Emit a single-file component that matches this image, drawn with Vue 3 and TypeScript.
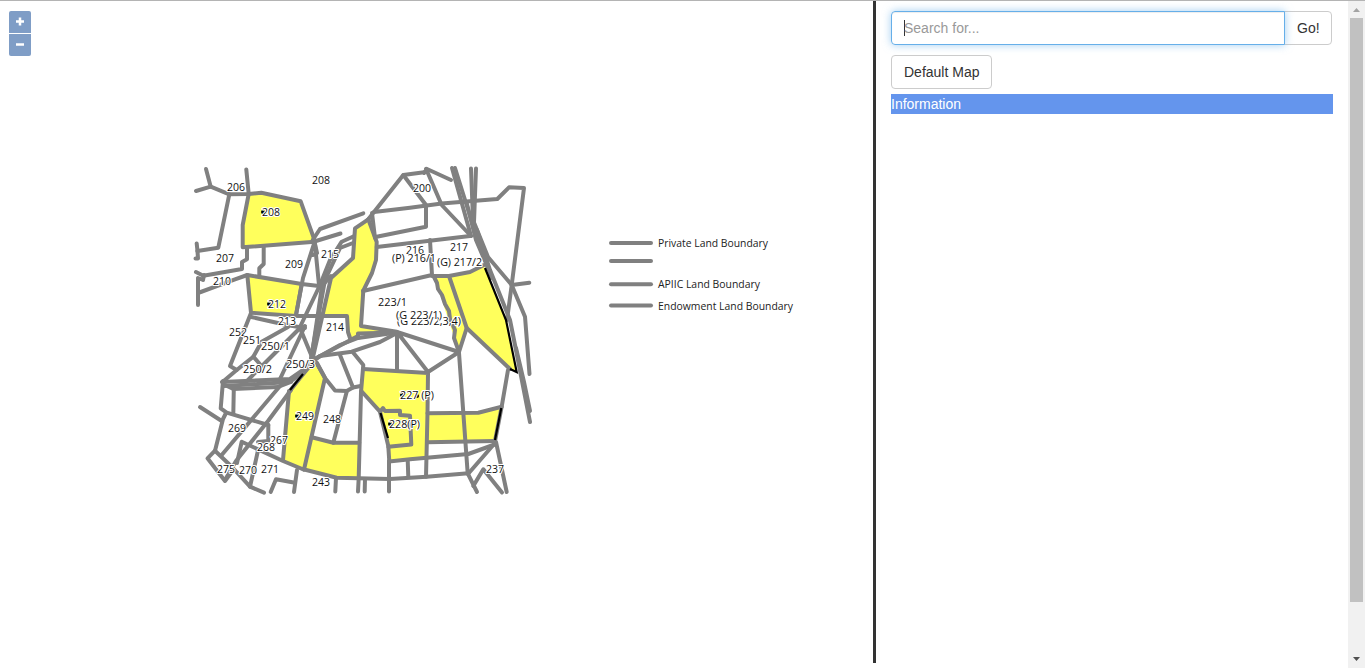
<script setup lang="ts">
import { ref } from 'vue'

interface Label { t: string; x: number; y: number; w: number }

const query = ref('')

const parcels: string[] = [
  '248.7,194 261.3,192.7 300.7,201.3 314.7,241.7 242.7,247.3 242.7,225',
  '247.3,275 301.7,284 296,315 251,312.5',
  '368.3,219.3 355,228.3 353,258 331,278 323,316 347,316 348,332 350,340 358,338 358,333 396,332 361,326 363,291 372,272 376,260 377,242',
  '434,276 449,276 466.7,328 459,352',
  '449,275 470,272 484,266 506.7,320 516.7,372 510,369 466.7,328',
  '315,363 325,378 304,469.5 283,460 289,391',
  '311.7,437.3 333.3,442.7 359.3,442.7 358.7,478 336.7,477.7 304,469.5',
  '363,369 428,373 427,457.7 389.3,461.7 388.3,446 380,411.7 361.3,391',
  '427.5,413.3 478.3,412.7 501.7,406.7 495,441 427.5,442.3',
]

const boundaries: string[] = [
  '206,169 210.7,186.7', '196,191 210.7,186.7 229.3,194.3 248.7,194 261.3,192.7 300.7,201.3 314.7,240.7',
  '246.3,169.5 248.7,194 242.7,225 242.7,247.3 314.7,241.7', '229.3,194.3 218.3,247.7 197.3,251',
  '196.7,243.5 197.5,251 198,258.5 195.5,258.5', '247,247.3 247,259.3 242,262 242,269 203.3,275.7 196,272', '204,275 203,280 198,278 198,305',
  '263.7,247.3 263.7,264 259.3,268.3 259.3,276', '198,293 235,279.3 247.3,275 301.7,284 319,286',
  '247.3,275 251,312.7 296,316 347,316 348,332 350,338', '301.7,284 296,315', '250,316.7 286.7,325 305,328',
  '251,313 230,366 236.7,370', '222.5,382 236.7,370 253.3,356.7 261.7,341.7 288,327', '253.3,356.7 260.7,365',
  '302,326 261,367 246,382', '305,326 280,379', '222,382 290,379 303,370 313,360', '224,386 290,382 303,372',
  '223,381 220.7,408.3 226.7,412.7 268.3,425', '225,385 233.3,389 278,387 291,382', '233.8,389 233.3,414',
  '280,386 221.7,455', '291,390 268,421 236,461 225,480', '200,407 221.7,421', '226,413 223,419 215,450.7 207.5,458.3 225,481 233,470',
  '215,450.7 232,467 250,486.7 264,492.7', '268.3,425 268.3,441 258,442', '237,463 241.7,441.7 283,461 303.5,469.5',
  '258.3,449 250,486.7', '270.7,492 276,479.3 295,482.7', '297,470 294,492', '289,391 283,460',
  '316,362 325,378 304,469.5', '314,361 300,378 289,392', '303.3,469.3 336.7,477.7 390,479 426.7,476.7 468.3,473.3',
  '317,363 325,378 335,390.5 346.7,391 353,387.5 360.7,386', '346.7,391.7 333.3,442.7', '311.7,437.3 333.3,442.7 359.3,442.7',
  '353.3,352.7 363.3,365 361,392 358.7,478', '340,355 353,387.5', '336,478 335.3,491.5', '358.7,478 358,491.5', '365,479 364.7,491.5', '389,461 389,491.5',
  '361.3,391 380,411.7 388.3,446 389.3,461.7', '389,461.5 410,459.3 468.3,454 496,444', '407.7,460 408.3,477',
  '380,411.7 383,408 385,411 400,410.7 400,415 410,415.7 411.3,444.5 388.3,446.7', '363,369 428,373 427.5,413 426,476.7',
  '427.5,413.3 478.3,412.7 501.7,406.7', '427.5,442.3 495,441', '508,370 501.7,406.7 495,441', '459,353 467.7,473.3',
  '495,443 468,474', '496,442 506.7,492', '467.7,473.3 477,492', '473.3,486 483.3,469.3 502,492.5',
  '312.7,240 320,229 363.3,213.3', '312.7,242 340.5,233.5', '314.7,241.7 303,278 296,315', '314.7,241.7 319,285', '315,244 317,253 313,255',
  '300,327 320,285 330,260 341.7,241.7 352.7,236.7', '300,328 312,357', '311,358 325,280 340,248 353,243', '313,357 331,278 353,258 355,228.3 368.3,219.3', '312,354 322,286 331,276',
  '368.3,219.3 376.7,242 376,260 372,273 363.3,290.7 361,326 396.7,331.7', '368.3,219.3 374,212 403.3,175 426,172',
  '374,212 410,207.7 441.7,203.5 497.3,199 509,187.3 524,188 511.7,285 507,320', '403.3,175 426,205 426,226.7 376.7,236.7',
  '372,213 375,238', '376.7,247 470,236', '426,168.8 441.7,205 471,236', '424,173 427,169 451,180', '452,168 471,236', '455,168 476,235 492,278',
  '471,168.5 473,220 488,257 511.7,285 525,316.7 529.5,374', '476,168.5 474,222', '466.7,203 476,240 488,268', '477,230 490,270 510,320 516,350 530,422', '516,348 524,382 530,411',
  '511.7,285 529.3,282.7', '430,240 432,275 363,291', '432,276 449,276 470,272 484,265',
  '449,276 466.7,328 459,352', '466.7,328 510,369', '434,277 437,283 438,289 442,295 445,304 449,311 450,319 455,330 454,338 459,352',
  '313,360 340,345 358,338 396.7,332.5', '313,361 320,356 351.7,351.7 380,342 397,333', '358,338 358,333.5 396.7,332.5', '397,333 397,370',
  '397,332 428,372 459,352 397,332', '313,360 358,336',
]

const darkEdges: string[] = ['485,268 506,320 516.7,372 510,369', '501.3,408 495,440', '380.5,413 388,438', '303,374 290,390']

const labels: Label[] = [
  { t: '206', x: 227, y: 191, w: 18 }, { t: '208', x: 312, y: 184, w: 18 }, { t: '208', x: 262, y: 216, w: 18 },
  { t: '200', x: 413, y: 192, w: 18 }, { t: '207', x: 216, y: 262, w: 18 }, { t: '209', x: 285, y: 268, w: 18 },
  { t: '215', x: 321, y: 258, w: 18 }, { t: '216', x: 406, y: 254, w: 18 }, { t: '217', x: 450, y: 251, w: 18 },
  { t: '(P) 216/1', x: 392, y: 262, w: 44 }, { t: '(G) 217/2', x: 437, y: 266, w: 45 }, { t: '210', x: 213, y: 285, w: 18 },
  { t: '212', x: 268, y: 308, w: 18 }, { t: '213', x: 278, y: 325, w: 18 }, { t: '214', x: 326, y: 331, w: 18 },
  { t: '223/1', x: 378, y: 306, w: 29 }, { t: '(G 223/2,3,4)', x: 397, y: 325, w: 64 }, { t: '(G 223/1)', x: 396, y: 319, w: 46 },
  { t: '252', x: 229, y: 336, w: 18 }, { t: '251', x: 243, y: 344, w: 18 }, { t: '250/1', x: 261, y: 350, w: 29 },
  { t: '250/2', x: 243, y: 373, w: 29 }, { t: '250/3', x: 286, y: 368, w: 29 }, { t: '227 (P)', x: 400, y: 399, w: 34 },
  { t: '228(P)', x: 389, y: 428, w: 31 }, { t: '249', x: 296, y: 420, w: 18 }, { t: '248', x: 323, y: 423, w: 18 },
  { t: '269', x: 228, y: 432, w: 18 }, { t: '267', x: 270, y: 444, w: 18 }, { t: '268', x: 257, y: 451, w: 18 },
  { t: '275', x: 217, y: 473, w: 18 }, { t: '270', x: 239, y: 474, w: 18 }, { t: '271', x: 261, y: 473, w: 18 },
  { t: '243', x: 312, y: 486, w: 18 }, { t: '237', x: 486, y: 473, w: 18 },
]

const anchors: [number, number][] = [[263, 212], [269, 304], [297, 416], [402, 395], [417, 396], [390, 424]]

const legend: Label[] = [
  { t: 'Private Land Boundary', x: 658, y: 243, w: 110 },
  { t: '', x: 658, y: 261, w: 0 },
  { t: 'APIIC Land Boundary', x: 658, y: 284.3, w: 102 },
  { t: 'Endowment Land Boundary', x: 658, y: 305.5, w: 135 },
]
</script>

<template>
  <div class="page">
    <main class="map">
      <svg class="canvas" width="873" height="662" viewBox="0 1 873 662">
        <polygon v-for="(p, i) in parcels" :key="'p' + i" class="parcel" :points="p" />
        <polyline v-for="(b, i) in boundaries" :key="'b' + i" class="boundary" :points="b" />
        <polyline v-for="(d, i) in darkEdges" :key="'d' + i" class="dark" :points="d" />
        <circle v-for="(a, i) in anchors" :key="'a' + i" :cx="a[0]" :cy="a[1]" r="2" />
        <text v-for="(l, i) in labels" :key="'l' + i" class="label" :x="l.x" :y="l.y" :textLength="l.w" lengthAdjust="spacingAndGlyphs">{{ l.t }}</text>
        <g v-for="(l, i) in legend" :key="'k' + i">
          <line class="boundary" x1="611" x2="651" :y1="l.y" :y2="l.y" />
          <text v-if="l.t" class="legend" :x="l.x" :y="l.y + 4" :textLength="l.w" lengthAdjust="spacingAndGlyphs">{{ l.t }}</text>
        </g>
      </svg>
      <div class="zoom">
        <button class="zoom-in" aria-label="Zoom in"><svg width="10" height="10"><path d="M5 .5V8.5M1 4.5H9" /></svg></button>
        <button class="zoom-out" aria-label="Zoom out"><svg width="10" height="10"><path d="M1 4.5H9" /></svg></button>
      </div>
    </main>
    <aside class="side">
      <div class="search">
        <div class="field"><i class="caret"></i><input v-model="query" placeholder="Search for..." /></div>
        <button class="btn go">Go!</button>
      </div>
      <button class="btn default">Default Map</button>
      <div class="info">Information</div>
    </aside>
    <div class="scroll">
      <svg width="17" height="17"><path d="M5 11L8.5 7L12 11Z" fill="#a3a3a3" /></svg>
      <div class="thumb"></div>
      <svg class="down" width="17" height="17"><path d="M5 6L8.5 10L12 6Z" fill="#505050" /></svg>
    </div>
  </div>
</template>

<style>
body { margin: 0; overflow: hidden; background: #fff; }
</style>

<style scoped>
* { box-sizing: border-box; }
.page { display: flex; height: 668px; width: 1365px; border-top: 1px solid #b4b4b4; background: #fff; color: #333; font: 14px/20px "Liberation Sans", Arial, sans-serif; }
.map { position: relative; width: 876px; height: 662px; border-right: 3px solid #333; }
.canvas { display: block; }
.parcel { fill: #ffff5c; }
.boundary { fill: none; stroke: #808080; stroke-width: 4; stroke-linecap: round; stroke-linejoin: round; }
.dark { fill: none; stroke: #000; stroke-width: 2.2; }
.label { font: 11px "Open Sans", "Noto Sans", sans-serif; fill: #111; stroke: #fff; stroke-width: 2.2px; stroke-linejoin: round; paint-order: stroke; }
.legend { font: 11px "Open Sans", "Noto Sans", sans-serif; fill: #222; }
.zoom { position: absolute; left: 9px; top: 10px; width: 22px; display: grid; gap: 1px; }
.zoom button { display: grid; place-items: center; height: 22px; padding: 0; border: 0; background: #7f9dc6; }
.zoom path { stroke: #fff; stroke-width: 2.5; fill: none; }
.zoom-in { border-radius: 2px 2px 0 0; }
.zoom-out { border-radius: 0 0 2px 2px; }
.side { flex: 1; padding: 10px 15px; }
.search { display: flex; width: 441px; height: 34px; }
.field { display: flex; align-items: center; flex: 1; padding-left: 12px; border: 1px solid #66afe9; border-radius: 4px 0 0 4px; box-shadow: inset 0 1px 1px rgba(0, 0, 0, .075), 0 0 8px rgba(102, 175, 233, .6); z-index: 1; }
.caret { width: 1px; height: 16px; margin-right: -1px; background: #333; }
input { flex: 1; min-width: 0; padding: 0; border: 0; outline: 0; background: none; font: inherit; color: #555; }
input::placeholder { color: #999; opacity: 1; }
.btn { height: 34px; padding: 6px 12px; border: 1px solid #ccc; border-radius: 4px; background: #fff; color: #333; font: inherit; white-space: nowrap; }
.go { width: 48px; margin-left: -1px; border-radius: 0 4px 4px 0; }
.default { display: block; width: 101px; margin-top: 10px; }
.info { width: 442px; height: 20px; margin-top: 5px; background: #6495ed; color: #fff; }
.scroll { display: flex; flex-direction: column; align-items: center; width: 17px; background: #f1f1f1; }
.scroll svg { display: block; flex: none; }
.thumb { width: 13px; height: 584px; background: #c1c1c1; }
.down { margin-top: auto; }
</style>
